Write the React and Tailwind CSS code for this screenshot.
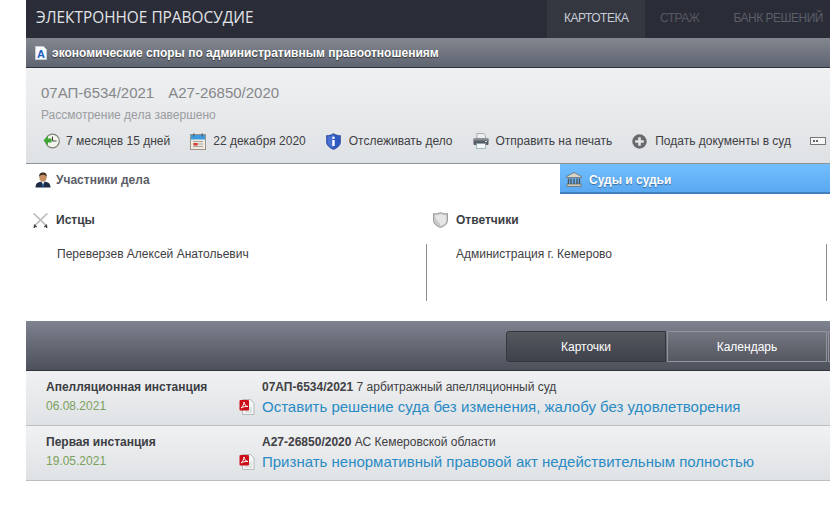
const F = "font-['Liberation_Sans',Arial,sans-serif]";

function ClockIcon() {
  return (
    <svg width="17" height="16" viewBox="0 0 17 16">
      <circle cx="9.5" cy="8" r="6.8" fill="#f4f4ee" stroke="#7d8478" strokeWidth="1.2" />
      <path d="M9.5 3.5V8H13.5" fill="none" stroke="#444" strokeWidth="1" />
      <path d="M0.4 7.5L5 2.8V5.4H8.6V9.6H5V12.2Z" fill="#3fa535" />
    </svg>
  );
}
function CalendarIcon() {
  return (
    <svg width="16" height="17" viewBox="0 0 16 17">
      <rect x="0.5" y="1.5" width="15" height="15" fill="#f2ebe0" stroke="#9a948a" />
      <rect x="1" y="2" width="14" height="4.5" fill="#3d9be0" />
      <rect x="3" y="0.5" width="1.6" height="3" fill="#5a6a7a" />
      <rect x="11.4" y="0.5" width="1.6" height="3" fill="#5a6a7a" />
      <path d="M3 8.5h10M3 11h10M3 13.5h10" stroke="#a8a49c" strokeWidth="1" />
      <rect x="3.5" y="10" width="4" height="2.5" fill="#d8392c" />
    </svg>
  );
}
function ShieldInfoIcon() {
  return (
    <svg width="15" height="17" viewBox="0 0 15 17">
      <path d="M7.5 0.5C9.5 2 12 2.6 14.5 2.6V9C14.5 12.5 11 15 7.5 16.5C4 15 0.5 12.5 0.5 9V2.6C3 2.6 5.5 2 7.5 0.5Z" fill="#2f57c0" stroke="#24408f" strokeWidth="0.6" />
      <path d="M7.5 1.5V15.5C4.5 14.2 1.5 12 1.5 9V3.5C3.5 3.4 5.8 2.8 7.5 1.5Z" fill="#5f86e0" opacity="0.55" />
      <circle cx="7.5" cy="4.8" r="1.3" fill="#fff" />
      <rect x="6.3" y="7" width="2.4" height="6" fill="#fff" />
    </svg>
  );
}
function PrinterIcon() {
  return (
    <svg width="16" height="16" viewBox="0 0 16 16">
      <path d="M4 0.5H10.5L12.5 2.5V6H4Z" fill="#eceef0" stroke="#8d9398" strokeWidth="0.7" />
      <rect x="0.5" y="5.5" width="15" height="6.5" rx="1" fill="#565c62" />
      <rect x="0.5" y="5.5" width="15" height="2" fill="#888e94" />
      <rect x="3.5" y="10.5" width="9" height="5" fill="#f3f6f7" stroke="#7f9fae" strokeWidth="0.7" />
      <rect x="12" y="8" width="2" height="1" fill="#d8dde0" />
    </svg>
  );
}
function PlusIcon() {
  return (
    <svg width="15" height="15" viewBox="0 0 15 15">
      <circle cx="7.5" cy="7.5" r="7.2" fill="#686b6e" />
      <path d="M7.5 3.2V11.8M3.2 7.5H11.8" stroke="#e4e5e6" strokeWidth="2.6" />
    </svg>
  );
}
function CardIcon() {
  return (
    <svg width="16" height="8" viewBox="0 0 16 8">
      <rect x="0.5" y="0.5" width="15" height="7" fill="#f6f6f6" stroke="#777" />
      <circle cx="4" cy="4" r="1.1" fill="#444" />
      <circle cx="7" cy="4" r="1.1" fill="#444" />
    </svg>
  );
}
function PersonIcon() {
  return (
    <svg width="16" height="16" viewBox="0 0 16 16">
      <path d="M0.5 15.5C0.5 12 2 10.6 5.2 9.8H10.8C14 10.6 15.5 12 15.5 15.5Z" fill="#1d2c44" />
      <path d="M6.5 10L8 13L9.5 10Z" fill="#e8eef4" />
      <rect x="7.4" y="11.5" width="1.2" height="4" fill="#2f6fb0" />
      <ellipse cx="8" cy="5.2" rx="3.6" ry="4.4" fill="#c98d63" />
      <path d="M4.2 5C3.8 1.5 6 0.4 8 0.4C10 0.4 12.2 1.5 11.8 5C11 3.2 9.5 2.8 8 2.8C6.5 2.8 5 3.2 4.2 5Z" fill="#3a2a20" />
    </svg>
  );
}
function SwordsIcon() {
  return (
    <svg width="15" height="15" viewBox="0 0 15 15">
      <path d="M0.6 0.4L13 12.4M14.4 0.4L2 12.4" stroke="#bdbdbd" strokeWidth="1.6" />
      <path d="M1 11.8L3.6 14M14 11.8L11.4 14" stroke="#333" strokeWidth="1.2" />
      <path d="M0.8 14.6L2 13.4M14.2 14.6L13 13.4" stroke="#111" strokeWidth="1.4" />
    </svg>
  );
}
function ShieldIcon() {
  return (
    <svg width="15" height="16" viewBox="0 0 15 16">
      <path d="M7.5 0.5C9.5 1.6 12 2 14.5 1.6V8.5C14.5 12 11 14.4 7.5 15.5C4 14.4 0.5 12 0.5 8.5V1.6C3 2 5.5 1.6 7.5 0.5Z" fill="#c8c8c8" stroke="#8c8c8c" strokeWidth="0.8" />
      <path d="M2 3.2C4 3.4 6 3 7.5 2.2C9 3 11 3.4 13 3.2V8.4C13 11 10.2 13 7.5 14C7.5 10 2 8 2 3.2Z" fill="#e6e6e6" />
    </svg>
  );
}
function BankIcon() {
  return (
    <svg width="16" height="15" viewBox="0 0 16 15">
      <path d="M8 0.5L15.5 4.5V5.5H0.5V4.5Z" fill="#d9d4c4" stroke="#5c6466" strokeWidth="0.7" />
      <path d="M2.5 6.5V12M5 6.5V12M8 6.5V12M11 6.5V12M13.5 6.5V12" stroke="#4e5558" strokeWidth="1.4" />
      <rect x="1" y="12" width="14" height="2.6" fill="#cfcabb" stroke="#5c6466" strokeWidth="0.7" />
    </svg>
  );
}
function PdfIcon() {
  return (
    <svg width="16" height="16" viewBox="0 0 16 16">
      <path d="M3.5 0.5H11.5L15 4V15.5H3.5Z" fill="#f3f5f5" stroke="#a9aeae" strokeWidth="0.8" />
      <path d="M6 9H13M6 11H13M6 13H13" stroke="#c3c7c7" strokeWidth="0.8" />
      <rect x="0.5" y="1" width="9.5" height="10.5" rx="1" fill="#cc0f16" />
      <path d="M2 9C3.5 8 5 5 5 3C5.2 5 6.5 7.2 9 7.5C6.5 7.2 3.5 8 2 9Z" fill="none" stroke="#fff" strokeWidth="1" />
    </svg>
  );
}
function DocIcon() {
  return (
    <svg width="12" height="14" viewBox="0 0 12 14">
      <path d="M0.5 0.5H8.5L11.5 3.5V13.5H0.5Z" fill="#f8fbff" stroke="#c9d0d8" strokeWidth="0.8" />
      <text x="6" y="11.5" textAnchor="middle" fontSize="11" fontWeight="700" fontFamily="Liberation Sans" fill="#1c5fc0">A</text>
    </svg>
  );
}

function Action({ icon, text, className = "" }) {
  return (
    <div className={`flex items-center shrink-0 ${className}`}>
      <div className="w-[23px] flex items-center">{icon}</div>
      <span className="text-[12px] leading-[16px] text-[#3f4044] whitespace-nowrap">{text}</span>
    </div>
  );
}

function Row({ label, date, num, court, link }) {
  return (
    <div className="h-[55px] flex border-b border-[#bcbfc2] bg-gradient-to-b from-[#f0f1f2] to-[#dfe2e5] shrink-0">
      <div className="w-[213px] pl-[20px] pt-[9px] shrink-0">
        <div className="text-[12px] leading-[15px] font-bold text-[#3c3e44] whitespace-nowrap">{label}</div>
        <div className="text-[12px] leading-[15px] mt-[4px] text-[#7ba05b]">{date}</div>
      </div>
      <div className="pt-[28px] w-[23px] shrink-0"><PdfIcon /></div>
      <div className="pt-[9px] min-w-0">
        <div className="text-[12px] leading-[15px] text-[#3f4044] whitespace-nowrap"><b>{num}</b> {court}</div>
        <div className="text-[15px] leading-[18px] mt-[3px] text-[#2a8bc4] whitespace-nowrap">{link}</div>
      </div>
    </div>
  );
}

export default function App() {
  return (
    <div className={`${F} w-[830px] h-[507px] overflow-hidden bg-white pl-[26px]`}>
      <div className="flex flex-col w-[804px]">
        <header className="h-[38px] bg-[#2a2c38] flex items-stretch shrink-0">
          <div className="pl-[10px] w-[521px] font-['Open_Sans',sans-serif] text-[15.4px] leading-[36px] text-[#e2e3e6] whitespace-nowrap shrink-0">ЭЛЕКТРОННОЕ ПРАВОСУДИЕ</div>
          <div className="w-[98px] pl-[17px] bg-[#343640] text-[12px] tracking-[-0.5px] leading-[36px] text-[#c6cdd6] shrink-0">КАРТОТЕКА</div>
          <div className="pl-[15px] text-[12px] tracking-[-0.5px] leading-[36px] text-[#55595f] shrink-0">СТРАЖ</div>
          <div className="pl-[34px] text-[12px] tracking-[-0.5px] leading-[36px] text-[#5a5e65] whitespace-nowrap shrink-0">БАНК РЕШЕНИЙ</div>
        </header>

        <div className="h-[30px] flex items-center pl-[9px] gap-[5px] bg-gradient-to-b from-[#82878f] to-[#5f6472] border-b border-[#2f3238] shrink-0">
          <DocIcon />
          <span className="text-[12px] font-bold text-white whitespace-nowrap [text-shadow:0_1px_1px_#333]">экономические споры по административным правоотношениям</span>
        </div>

        <section className="h-[96px] overflow-hidden bg-gradient-to-b from-[#eff0f1] to-[#dfe2e5] border-b border-[#8f9296] pl-[15px] pt-[15px] shrink-0">
          <div className="text-[15px] leading-[20px] text-[#85878a] whitespace-nowrap">
            07АП-6534/2021<span className="ml-[14px]">А27-26850/2020</span>
          </div>
          <div className="text-[12px] leading-[15px] mt-[5px] text-[#9a9c9f]">Рассмотрение дела завершено</div>
          <div className="flex items-center h-[18px] mt-[9px] pl-[2px] w-[900px]">
            <Action icon={<ClockIcon />} text="7 месяцев 15 дней" />
            <Action icon={<CalendarIcon />} text="22 декабря 2020" className="ml-[20px]" />
            <Action icon={<ShieldInfoIcon />} text="Отслеживать дело" className="ml-[20px]" />
            <Action icon={<PrinterIcon />} text="Отправить на печать" className="ml-[20px]" />
            <Action icon={<PlusIcon />} text="Подать документы в суд" className="ml-[20px]" />
            <div className="ml-[19px]"><CardIcon /></div>
          </div>
        </section>

        <div className="h-[30px] flex shrink-0">
          <div className="w-[534px] flex items-center pl-[9px] gap-[5px] pt-[2px] text-[12px] font-bold text-[#5b5e68] shrink-0">
            <PersonIcon />
            <span>Участники дела</span>
          </div>
          <div className="flex-1 flex items-center pl-[6px] gap-[7px] pt-[3px] bg-gradient-to-b from-[#72beff] to-[#5aa8f0] border-b-2 border-[#3f80bd] text-[12px] font-bold text-white">
            <BankIcon />
            <span className="[text-shadow:0_1px_1px_#3a6a9a]">Суды и судьи</span>
          </div>
        </div>

        <div className="h-[127px] flex shrink-0">
          <div className="w-[400px] shrink-0">
            <div className="flex items-center h-[16px] mt-[18px] pl-[7px] gap-[8px] text-[12px] font-bold text-[#3c3e44]">
              <SwordsIcon /><span>Истцы</span>
            </div>
            <div className="text-[12px] leading-[15px] mt-[19px] pl-[31px] text-[#3f4044]">Переверзев Алексей Анатольевич</div>
          </div>
          <div className="flex-1">
            <div className="flex items-center h-[16px] mt-[18px] pl-[7px] gap-[8px] text-[12px] font-bold text-[#3c3e44]">
              <ShieldIcon /><span>Ответчики</span>
            </div>
            <div className="h-[57px] w-[401px] mt-[16px] border-l border-r border-[#8a8c90] pl-[29px] pt-[3px] text-[12px] leading-[15px] text-[#3f4044]">Администрация г. Кемерово</div>
          </div>
        </div>

        <div className="h-[50px] flex pt-[10px] pl-[480px] bg-gradient-to-b from-[#7f8390] to-[#4d515b] border-b border-[#2f3238] shrink-0">
          <div className="w-[160px] h-[31px] rounded-l-[3px] border border-[#34363c] bg-gradient-to-b from-[#55585f] to-[#3f424a] text-center text-[12px] leading-[30px] text-white shrink-0">Карточки</div>
          <div className="w-[160px] h-[31px] ml-[1px] border border-[#91949b] bg-gradient-to-b from-[#747781] to-[#555861] text-center text-[12px] leading-[30px] text-white shrink-0">Календарь</div>
          <div className="w-[2px] h-[31px] ml-[1px] border border-[#91949b] border-r-0 bg-gradient-to-b from-[#747781] to-[#555861] shrink-0" />
        </div>

        <Row label="Апелляционная инстанция" date="06.08.2021" num="07АП-6534/2021" court="7 арбитражный апелляционный суд" link="Оставить решение суда без изменения, жалобу без удовлетворения" />
        <Row label="Первая инстанция" date="19.05.2021" num="А27-26850/2020" court="АС Кемеровской области" link="Признать ненормативный правовой акт недействительным полностью" />
      </div>
    </div>
  );
}
